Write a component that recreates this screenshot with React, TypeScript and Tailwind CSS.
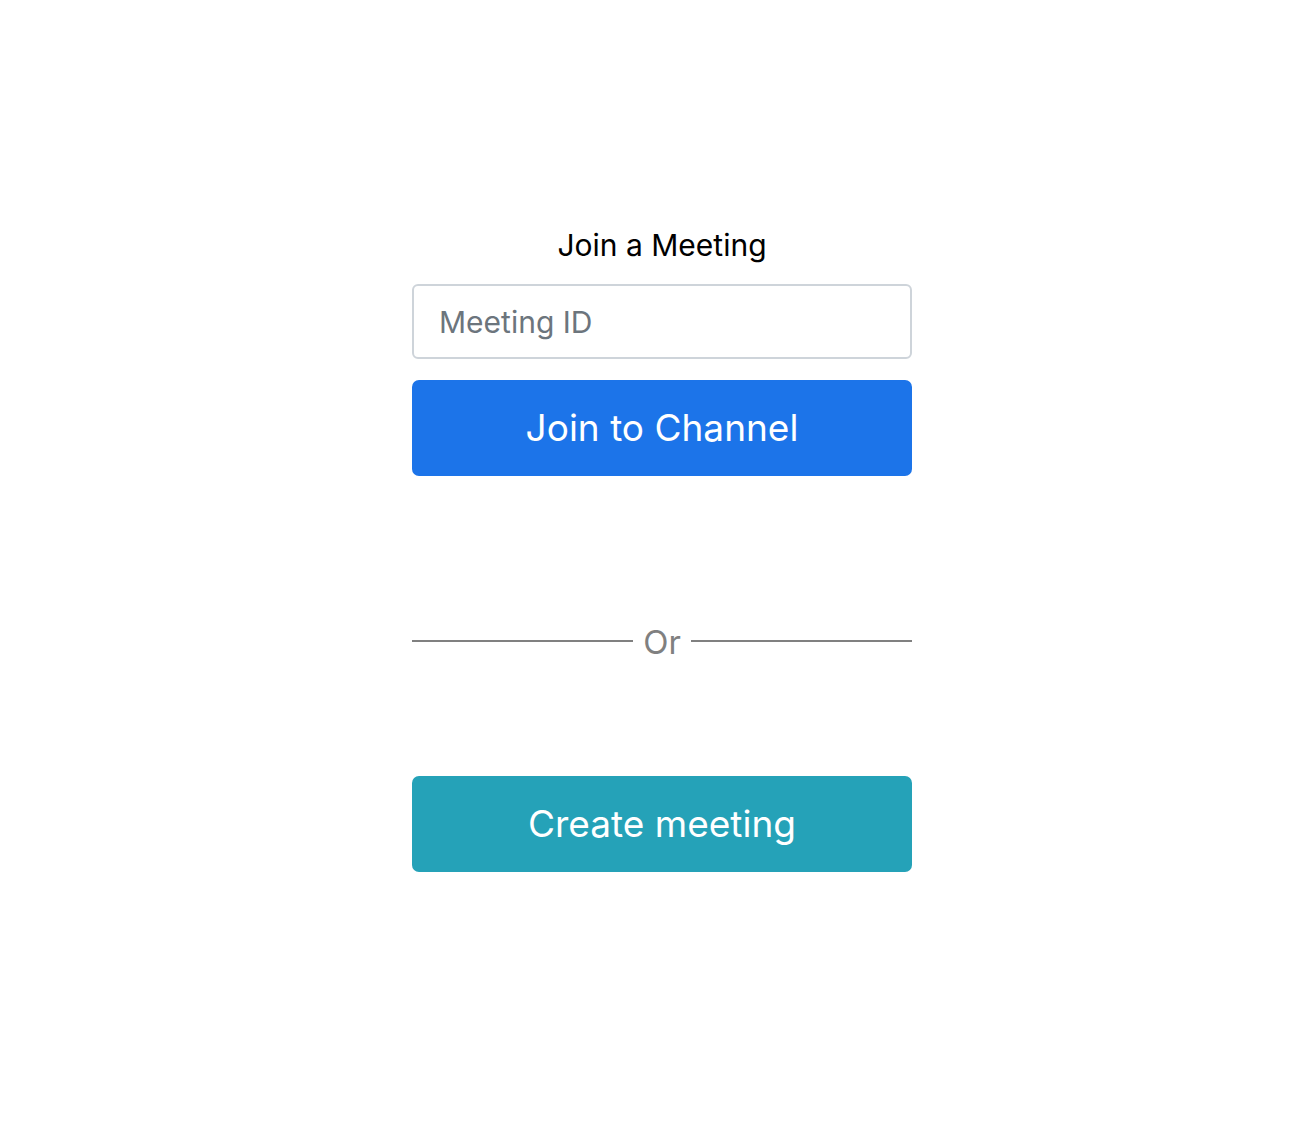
import React from "react";

export default function App() {
  return (
    <div className="min-h-[1130px] w-full bg-white" style={{ fontFamily: "Inter, 'Noto Sans', sans-serif" }}>
      <div className="ml-[412px] flex w-[500px] flex-col pt-[226px]">
        <h1 className="text-center text-[30px] leading-[38px] text-black">Join a Meeting</h1>
        <input
          className="mt-[20px] h-[75px] w-full rounded-[6px] border-2 border-[#ced4da] px-[25px] text-[30px] text-[#495057] placeholder:text-[#6c757d] outline-none"
          placeholder="Meeting ID"
        />
        <button className="mt-[21px] h-[96px] w-full rounded-[7px] bg-[#1c74e9] text-[37px] text-white">
          Join to Channel
        </button>
        <div className="mt-[146px] flex items-center gap-[10px]">
          <div className="mb-[3px] h-[2px] flex-1 bg-[#808080]" />
          <span className="text-[33px] leading-[40px] text-[#808080]">Or</span>
          <div className="mb-[3px] h-[2px] flex-1 bg-[#808080]" />
        </div>
        <button className="mt-[114px] h-[96px] w-full rounded-[7px] bg-[#25a2b8] text-[37px] text-white">
          Create meeting
        </button>
      </div>
    </div>
  );
}
